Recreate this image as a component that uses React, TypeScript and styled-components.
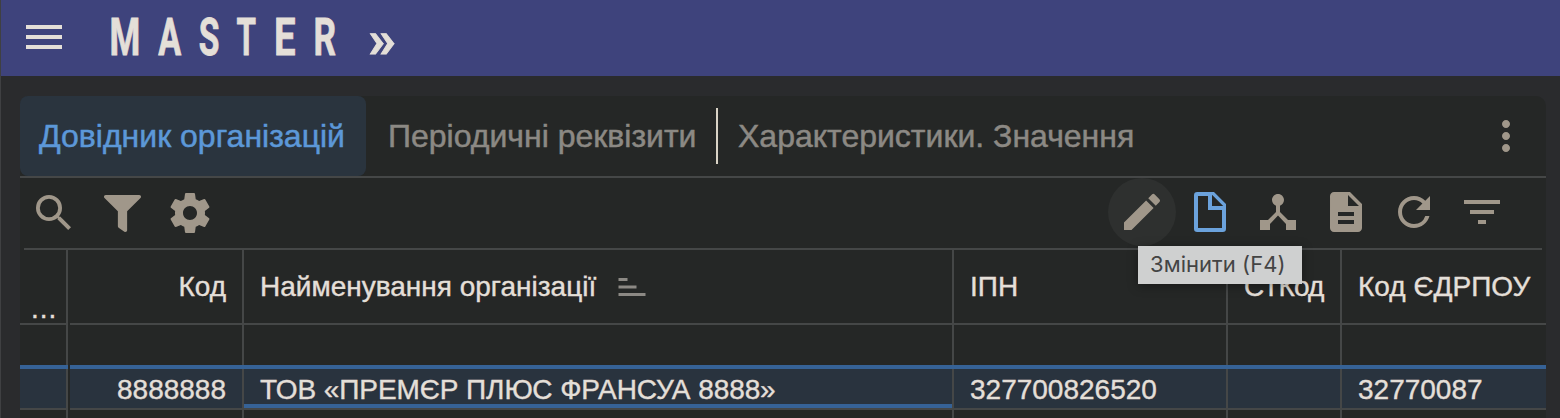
import React from 'react';
import styled, { createGlobalStyle, css } from 'styled-components';
import {
  MdMenu, MdEdit, MdDeviceHub,
  MdDescription, MdRefresh, MdFilterList, MdMoreVert, MdSort,
} from 'react-icons/md';
import { FaFilter } from 'react-icons/fa';

const c = {
  line: '#454747',
  panel: '#252726',
  text: '#e4dfd8',
  icon: '#a0978a',
  muted: '#8c8984',
  blue: '#366296',
};

const Global = createGlobalStyle`
  * { box-sizing: border-box; }
  body { margin: 0; background: #2a2b2d; font-family: "Liberation Sans", Arial, sans-serif; overflow: hidden; }
  svg { display: block; flex: none; }
`;

const Page = styled.div`
  height: 418px;
  overflow: hidden;
  border-left: 1px solid rgba(255, 255, 255, 0.1);
`;

const Header = styled.header`
  height: 76px;
  background: #3e437c;
  color: ${c.text};
  display: flex;
  padding: 13px 0 0 19px;
`;

const Brand = styled.div`
  display: flex;
  margin-left: 40px;
  height: 48px;
  font: 700 52.5px/49px Roboto, sans-serif;
  -webkit-text-stroke: 0.8px ${c.text};
`;

const Letter = styled.span<{ $w: number; $scale: number }>`
  width: ${p => p.$w}px;
  display: flex;
  justify-content: center;
  & > span { transform: scaleX(${p => p.$scale}); }
`;

const Chevrons = styled.span`
  font: 700 52px/48px Roboto, sans-serif;
  margin: 3px 0 0 18px;
  transform: scaleX(1.08);
`;

const Panel = styled.main`
  margin: 20px 14px 0 19px;
  height: 340px;
  background: ${c.panel};
  border-radius: 10px 10px 0 0;
`;

const Tabs = styled.nav`
  height: 82px;
  display: flex;
  border-bottom: 2px solid ${c.line};
`;

const Tab = styled.div<{ $active?: boolean; $w: number; $pad: number }>`
  width: ${p => p.$w}px;
  height: 80px;
  padding-left: ${p => p.$pad}px;
  font-size: 32px;
  line-height: 80px;
  white-space: nowrap;
  color: ${c.muted};
  -webkit-text-stroke: 0.5px currentColor;
  ${p => p.$active && css`
    color: #5c98d8;
    background: #2a343e;
    border-radius: 8px;
  `}
`;

const TabDivider = styled.div`
  width: 2px;
  height: 56px;
  margin-top: 12px;
  background: #d9d3c6;
`;

const MoreButton = styled.div`
  margin: 16px 16px 0 auto;
  color: ${c.icon};
`;

const Toolbar = styled.div`
  height: 70px;
  display: flex;
  justify-content: space-between;
  padding: 0 30px 0 0;
  color: ${c.icon};
`;

const Group = styled.div<{ $top?: number }>`
  display: flex;
  padding-top: ${p => p.$top ?? 0}px;
`;

const IconButton = styled.div<{ $hover?: boolean; $accent?: boolean }>`
  position: relative;
  width: 68px;
  height: 68px;
  display: flex;
  align-items: center;
  justify-content: center;
  border-radius: 50%;
  ${p => p.$hover && css`background: #2e302f;`}
  ${p => p.$accent && css`color: #6ba2dc;`}
`;

const Tooltip = styled.div`
  position: absolute;
  z-index: 2;
  left: 30px;
  top: 68px;
  width: 164px;
  height: 38px;
  padding-left: 12px;
  background: #cfd0d0;
  color: #444;
  font: 400 22px/36px Inter, sans-serif;
  letter-spacing: 0.05px;
  white-space: nowrap;
  box-shadow: 0 2px 10px rgba(0, 0, 0, 0.35);
`;

const TableTop = styled.div`
  height: 2px;
  margin: 0 4px;
  background: ${c.line};
`;

const Row = styled.div<{ $h: number }>`
  display: grid;
  grid-template-columns: 48px 176px 710px 274px 114px 204px;
  height: ${p => p.$h}px;
`;

type CellKind = 'head' | 'plain' | 'selected';

const Cell = styled.div<{ $kind: CellKind; $right?: boolean; $focus?: boolean; $low?: boolean; $ls?: number }>`
  display: flex;
  align-items: center;
  justify-content: ${p => (p.$right ? 'flex-end' : 'flex-start')};
  padding: 0 16px;
  font-size: 28px;
  letter-spacing: ${p => p.$ls ?? 0}px;
  white-space: nowrap;
  color: ${c.text};
  -webkit-text-stroke: 0.4px currentColor;
  border-right: 2px solid ${c.line};
  &:last-child { border-right: 0; }
  &:nth-child(2) { margin-left: 2px; }
  ${p => p.$kind === 'head' && css`
    padding-bottom: 2px;
    box-shadow: inset 0 -2px ${c.line};
  `}
  ${p => p.$kind === 'selected' && css`
    background: #29333e;
    box-shadow: inset 0 -2px ${c.line}${p.$focus ? `, inset 0 -6px ${c.blue}` : ''};
  `}
  ${p => p.$low && css`
    align-items: flex-end;
    padding: 0 0 0 11px;
  `}
`;

const BlueCell = styled.div`
  background: ${c.blue};
  &:nth-child(2) { margin-left: 2px; }
`;

const SortMark = styled.span`
  margin-left: 18px;
  color: ${c.muted};
  transform: scaleY(-1);
`;

const SearchIcon = () => (
  <svg width="48" height="48" viewBox="0 0 24 24" fill="none" stroke="currentColor">
    <circle cx="9.5" cy="9.5" r="5.55" strokeWidth="1.9" />
    <path d="M13.2 13.2l1.6 1.6" strokeWidth="1.3" />
    <path d="M14.4 14.4l5.4 5.4" strokeWidth="2" />
  </svg>
);

const FileIcon = () => (
  <svg width="48" height="48" viewBox="0 0 24 24" fill="currentColor" fillRule="evenodd">
    <path d="M5.6 2H14l6 6v12.4a1.6 1.6 0 0 1-1.6 1.6H5.6A1.6 1.6 0 0 1 4 20.400V3.600A1.6 1.6 0 0 1 5.600 2zM6 4v16h12v-9h-7V4zM13 3.400V9h5.600z" />
  </svg>
);

const Gear = () => (
  <svg width="48" height="48" viewBox="0 0 24 24" fill="currentColor">
    <path d="M19.43 12.98c.04-.32.07-.64.07-.98s-.03-.66-.07-.98l2.11-1.65c.19-.15.24-.42.12-.64l-2-3.46c-.12-.22-.39-.3-.61-.22l-2.49 1c-.52-.4-1.08-.73-1.69-.98l-.38-2.65C14.46 2.18 14.25 2 14 2h-4c-.25 0-.46.18-.49.42l-.38 2.65c-.61.25-1.17.59-1.69.98l-2.49-1c-.23-.09-.49 0-.61.22l-2 3.46c-.13.22-.07.49.12.64l2.11 1.65c-.04.32-.07.65-.07.98s.03.66.07.98l-2.11 1.65c-.19.15-.24.42-.12.64l2 3.46c.12.22.39.3.61.22l2.49-1c.52.4 1.08.73 1.69.98l.38 2.65c.03.24.24.42.49.42h4c.25 0 .46-.18.49-.42l.38-2.65c.61-.25 1.17-.59 1.69-.98l2.49 1c.23.09.49 0 .61-.22l2-3.46c.12-.22.07-.49-.12-.64l-2.11-1.65zM12 15.5c-1.93 0-3.5-1.57-3.5-3.5s1.57-3.5 3.5-3.5 3.5 1.57 3.5 3.5-1.57 3.5-3.5 3.5z" />
  </svg>
);

// Glyph, advance width, horizontal scale
const letters: [string, number, number][] = [
  ['M', 34, 0.67], ['A', 55, 0.65], ['S', 25, 0.64], ['T', 49, 0.6], ['E', 28, 0.73], ['R', 52, 0.67],
];

const columns = [0, 1, 2, 3, 4, 5];

export default function App() {
  return (
    <Page>
      <Global />
      <Header>
        <MdMenu size={48} />
        <Brand>
          {letters.map(([ch, w, s]) => (
            <Letter key={ch} $w={w} $scale={s}><span>{ch}</span></Letter>
          ))}
          <Chevrons>»</Chevrons>
        </Brand>
      </Header>
      <Panel>
        <Tabs>
          <Tab $active $w={346} $pad={19}>Довідник організацій</Tab>
          <Tab $w={350} $pad={22}>Періодичні реквізити</Tab>
          <TabDivider />
          <Tab $w={440} $pad={20}>Характеристики. Значення</Tab>
          <MoreButton><MdMoreVert size={48} /></MoreButton>
        </Tabs>
        <Toolbar>
          <Group $top={1}>
            <IconButton><SearchIcon /></IconButton>
            <IconButton><FaFilter size={37} /></IconButton>
            <IconButton><Gear /></IconButton>
          </Group>
          <Group>
            <IconButton $hover>
              <MdEdit size={48} />
              <Tooltip>Змінити (F4)</Tooltip>
            </IconButton>
            <IconButton $accent><FileIcon /></IconButton>
            <IconButton><MdDeviceHub size={48} /></IconButton>
            <IconButton><MdDescription size={48} /></IconButton>
            <IconButton><MdRefresh size={48} /></IconButton>
            <IconButton><MdFilterList size={48} /></IconButton>
          </Group>
        </Toolbar>
        <TableTop />
        <Row $h={75}>
          <Cell $kind="head" $low $ls={1}>...</Cell>
          <Cell $kind="head" $right>Код</Cell>
          <Cell $kind="head">
            Найменування організації
            <SortMark><MdSort size={36} /></SortMark>
          </Cell>
          <Cell $kind="head">ІПН</Cell>
          <Cell $kind="head" $ls={-0.9}>СТКод</Cell>
          <Cell $kind="head">Код ЄДРПОУ</Cell>
        </Row>
        <Row $h={40}>
          {columns.map(i => <Cell key={i} $kind="plain" />)}
        </Row>
        <Row $h={4}>
          {columns.map(i => <BlueCell key={i} />)}
        </Row>
        <Row $h={41}>
          <Cell $kind="selected" />
          <Cell $kind="selected" $right>8888888</Cell>
          <Cell $kind="selected" $focus $ls={-0.08}>ТОВ «ПРЕМЄР ПЛЮС ФРАНСУА 8888»</Cell>
          <Cell $kind="selected">327700826520</Cell>
          <Cell $kind="selected" />
          <Cell $kind="selected">32770087</Cell>
        </Row>
        <Row $h={26}>
          {columns.map(i => <Cell key={i} $kind="plain" />)}
        </Row>
      </Panel>
    </Page>
  );
}
